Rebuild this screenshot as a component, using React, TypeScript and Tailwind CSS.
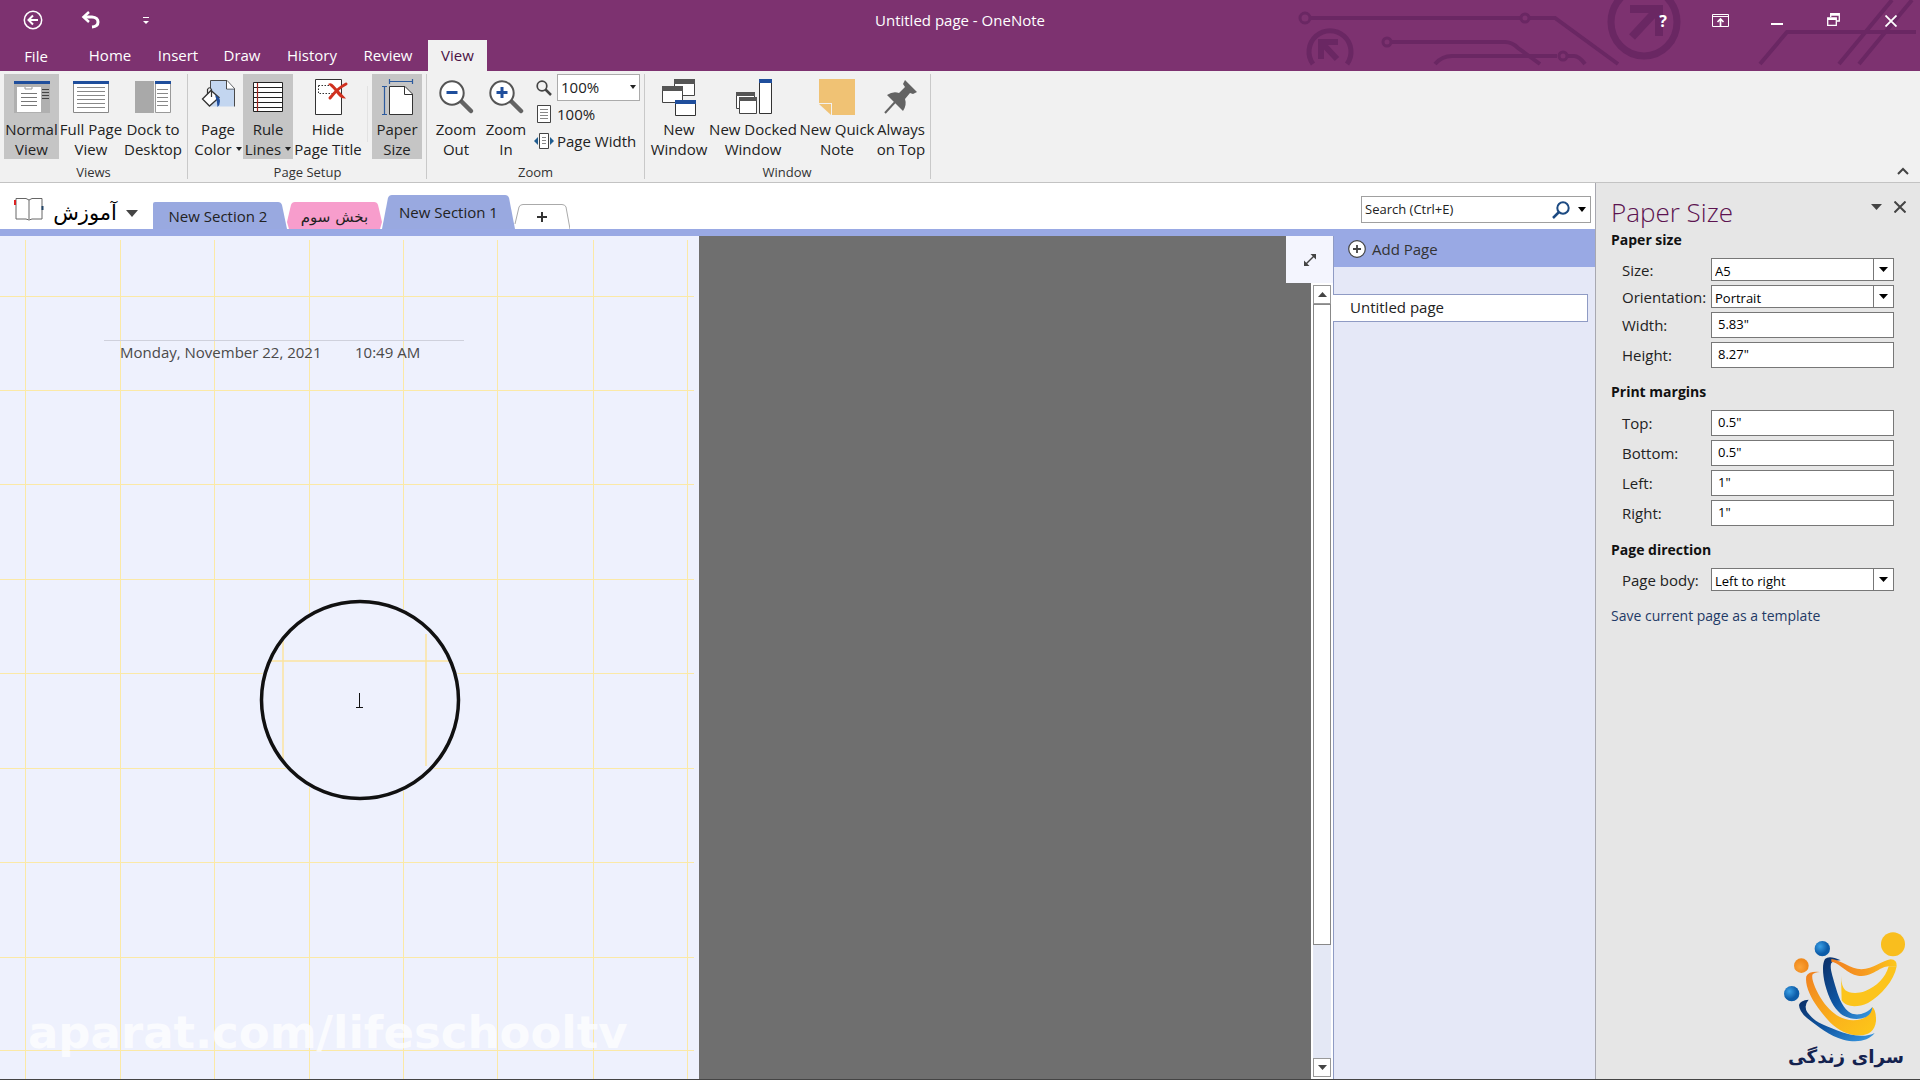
import React, { useId } from "react";

const UI = "font-['Open_Sans','Noto_Sans',sans-serif]";

function Caret({ className = "w-2 h-[5px]" }: { className?: string }) {
  return (
    <svg viewBox="0 0 10 6" preserveAspectRatio="none" className={className} fill="currentColor" aria-hidden>
      <path d="M0 0H10L5 6Z" />
    </svg>
  );
}

/* ---------- Title bar ---------- */

function Circuit() {
  return (
    <svg viewBox="0 0 640 70" className="pointer-events-none absolute top-0 right-0 h-[70px] w-[640px]" fill="none" stroke="#6a2763" strokeWidth="4" aria-hidden>
      <circle cx="25" cy="18" r="5" strokeWidth="3" />
      <path d="M31 18H240M250 18H275L338 64" />
      <circle cx="245" cy="18" r="4" strokeWidth="3" />
      <circle cx="107" cy="42" r="4" strokeWidth="3" />
      <path d="M112 42H225Q232 42 238 48L260 64" />
      <path d="M155 64Q162 56 172 56H277M288 56H294Q299 56 305 64" />
      <circle cx="283" cy="56" r="4" strokeWidth="3" />
      <path d="M33 64A21 21 0 1 1 67 64" strokeWidth="5" />
      <path d="M41 59V42H58M42 43L57 59" strokeWidth="6" />
      <ellipse cx="364" cy="22" rx="33" ry="34" strokeWidth="7" />
      <path d="M350 9H379V36M378 9L352 37" strokeWidth="8" />
      <path d="M480 64L507 32H636M559 64L612 0M579 64L607 30L632 0" />
    </svg>
  );
}

function TitleBar() {
  return (
    <div className="relative flex h-10 items-center text-white">
      <button aria-label="Back" className="ml-[23px]">
        <svg viewBox="0 0 20 20" className="size-5" fill="none" stroke="currentColor" strokeWidth="1.5">
          <circle cx="10" cy="10" r="8.7" />
          <path d="M15 10H6M10 5.5L5.5 10L10 14.500" strokeWidth="2" />
        </svg>
      </button>
      <button aria-label="Undo" className="ml-[38px]">
        <svg viewBox="0 0 20 18" className="h-[18px] w-5" fill="none" stroke="currentColor" strokeWidth="3">
          <path d="M3 6H11Q17 6.500 17 11Q17 15.500 11 16" />
          <path d="M8 1L2.500 6L8 11" strokeWidth="2.500" />
        </svg>
      </button>
      <button aria-label="Customize Quick Access Toolbar" className="ml-[42px] flex flex-col items-center gap-[3px]">
        <span className="h-px w-[6px] bg-white" />
        <Caret className="h-[3px] w-[6px]" />
      </button>
      <h1 className="pointer-events-none absolute inset-x-0 top-[10px] text-center text-[15px] leading-5">
        Untitled page - OneNote
      </h1>
      <div className="ml-auto flex items-center pt-px pr-[23px]">
        <button aria-label="Help" className="mr-[41px] w-4 text-center text-base leading-5 font-bold">?</button>
        <button aria-label="Ribbon Display Options" className="mr-[42px]">
          <svg viewBox="0 0 17 13" className="h-[13px] w-[17px]" fill="none" stroke="currentColor">
            <path d="M.5.5H16.500V12.500H.5ZM.5 2.500H16.500" />
            <path d="M8.500 12V5M5.500 8L8.500 5L11.500 8" strokeWidth="1.700" />
          </svg>
        </button>
        <button aria-label="Minimize" className="mr-11 flex h-2 items-end">
          <span className="h-[2px] w-3 bg-white" />
        </button>
        <button aria-label="Restore" className="mr-[45px]">
          <svg viewBox="0 0 13 13" className="mb-[3px] size-[13px]" fill="none" stroke="currentColor" strokeWidth="1.300">
            <path d="M.7 5H9.300V12.300H.7ZM.7 6.300H9.300M3.700 4V.7H12.300V8H10M3.700 2H12.300" />
          </svg>
        </button>
        <button aria-label="Close">
          <svg viewBox="0 0 12 12" className="size-3" stroke="currentColor" strokeWidth="1.800">
            <path d="M.5.5L11.500 11.500M11.500.5L.5 11.500" />
          </svg>
        </button>
      </div>
    </div>
  );
}

function RibbonTabs() {
  return (
    <nav className="relative flex h-[31px] items-stretch text-[15px] leading-[29px] text-white">
      <button className="w-[72px] pt-px">File</button>
      <button className="w-[76px]">Home</button>
      <button className="w-[60px]">Insert</button>
      <button className="w-[68px]">Draw</button>
      <button className="w-[72px]">History</button>
      <button className="w-20">Review</button>
      <button className="w-[59px] bg-[#f1f1f1] text-[#4a1145]">View</button>
    </nav>
  );
}

/* ---------- Ribbon icons (36 x 36) ---------- */

function Ico({ children }: { children: React.ReactNode }) {
  return (
    <svg viewBox="0 0 36 36" className="size-9 shrink-0 overflow-visible" fill="none" aria-hidden>
      {children}
    </svg>
  );
}

const NormalViewIcon = () => (
  <Ico>
    <path d="M0 2H36V34H0Z" fill="#b0b0b0" />
    <path d="M0 2H36V5H0Z" fill="#1f4e9c" />
    <path d="M3 8H27V33H3Z" fill="#fff" />
    <path d="M11 8V10H18V8" stroke="#999" />
    <path d="M7 14.500H23M7 18.500H23M7 22.500H23M7 26.500H23" stroke="#777" />
    <path d="M28 10.500H35M28 13.500H35M28 16.500H35M28 19.500H35" stroke="#444" />
  </Ico>
);
const FullPageIcon = () => (
  <Ico>
    <path d="M.5 4V33.500H35.500V4" fill="#fff" stroke="#888" />
    <path d="M0 2H36V5H0Z" fill="#1f4e9c" />
    <path d="M4 8.500H32M4 12.500H32M4 16.500H32M4 20.500H32M4 24.500H32M4 28.500H32" stroke="#888" />
  </Ico>
);
const DockIcon = () => (
  <Ico>
    <path d="M0 2H19V34H0Z" fill="#a9a9a9" />
    <path d="M20.500 4V33.500H35.500V4" fill="#fff" stroke="#999" />
    <path d="M20 2H36V5H20Z" fill="#1f4e9c" />
    <path d="M22 10.500H33M22 14.500H33M22 18.500H33M22 22.500H33M22 26.500H33" stroke="#888" />
  </Ico>
);
const PageColorIcon = () => (
  <Ico>
    <path d="M10.500 1.500H27L34.500 9.500V27.500H10.500Z" fill="#c3d6f0" />
    <path d="M10.500 9V1.500H27L34.500 9.500V27.500M26.500 1.500V10H34.500" stroke="#4a4a4a" />
    <path d="M27 2V9.500H34Z" fill="#fff" />
    <path d="M2.500 20L11 11.500L19 18.500L9.500 27Z" fill="#fff" stroke="#333" strokeWidth="1.300" />
    <path d="M7.500 15V10.500Q9.500 7 11.500 10.500V18" stroke="#333" strokeWidth="1.200" />
    <path d="M15 16Q20 18 20 22Q20 26 17.500 28Q17 21 15 16Z" fill="#1f4e9c" />
  </Ico>
);
const RuleLinesIcon = () => (
  <Ico>
    <path d="M3.500 3.500H32.500V32.500H3.500Z" fill="#fff" stroke="#222" />
    <path d="M4 8.500H32M4 13.500H32M4 18.500H32M4 23.500H32M4 28.500H32" stroke="#222" strokeWidth="1.200" />
    <path d="M7.500 4V32" stroke="#a3281f" strokeWidth="1.200" />
  </Ico>
);
const HideTitleIcon = () => (
  <Ico>
    <path d="M5.500.5H31.500V35.500H5.500Z" fill="#fff" stroke="#333" />
    <path d="M8.500 6.500H20M8.500 6.500V14.500H24" stroke="#333" strokeDasharray="1.500 1.500" />
    <path d="M18 5Q21 3 23.500 6Q29 12 36 19.500Q31 20 28 16Q24 10 18 5Z" fill="#d0311f" />
    <path d="M36 5Q28 9 20 19" stroke="#d0311f" strokeWidth="3" strokeLinecap="round" />
  </Ico>
);
const PaperSizeIcon = () => (
  <Ico>
    <path d="M10.500 7.500H26L33.500 15V35.500H10.500Z" fill="#fff" stroke="#333" />
    <path d="M25.500 8V15.500H33" stroke="#333" />
    <path d="M11 2.500H33M10.500 0V5M33.500 0V5M5.500 8V35M3 7.500H8M3 35.500H8" stroke="#2c5a9e" strokeWidth="1.200" />
  </Ico>
);
const ZoomIcon = ({ plus }: { plus?: boolean }) => (
  <Ico>
    <path d="M23 22L33 32" stroke="#636363" strokeWidth="4.500" strokeLinecap="round" />
    <circle cx="14" cy="14" r="11.700" fill="#fff" stroke="#555" strokeWidth="2" />
    <path d={plus ? "M8.500 13.500H19.500M14 8V19" : "M8.500 13.500H19.500"} stroke="#1f4e9c" strokeWidth="3" />
  </Ico>
);
const NewWindowIcon = () => (
  <Ico>
    <path d="M13.500 1.500H33.500V16.500H13.500Z" fill="#fff" stroke="#444" />
    <path d="M13 0H34V5H13Z" fill="#555" />
    <path d="M1.500 8.500H21.500V23.500H1.500Z" fill="#fff" stroke="#444" />
    <path d="M1 7H22V12H1Z" fill="#555" />
    <path d="M14.500 22.500H34.500V36.500H14.500Z" fill="#fff" stroke="#333" />
    <path d="M14 21H35V25H14Z" fill="#1f4e9c" />
  </Ico>
);
const DockedWindowIcon = () => (
  <Ico>
    <path d="M1.500 14.500H19.500V29.500H1.500Z" fill="#fff" stroke="#444" />
    <path d="M1 13H20V17H1Z" fill="#555" />
    <path d="M4.500 19.500H21.500V34.500H4.500Z" fill="#fff" stroke="#444" />
    <path d="M4 18H22V22H4Z" fill="#555" />
    <path d="M24.500.5H36.500V34.500H24.500Z" fill="#fff" stroke="#333" />
    <path d="M24 0H37V4H24Z" fill="#1f4e9c" />
  </Ico>
);
const QuickNoteIcon = () => (
  <Ico>
    <path d="M0 0H36V36H13V24H0Z" fill="#f0c274" />
    <path d="M0 25H12V36Z" fill="#f0c274" />
  </Ico>
);
const PinIcon = () => (
  <Ico>
    <path d="M22 1L34 13L30 15L27 14L22 20Q24 26 20 32L4 16Q10 12 16 14L22 8L20 5Z" fill="#636363" />
    <path d="M13 22L2 34" stroke="#636363" strokeWidth="2" />
  </Ico>
);

/* ---------- Ribbon ---------- */

function RibbonButton({ icon, lines, width, active, caret }: {
  icon: React.ReactNode; lines: [string, string]; width: string; active?: boolean; caret?: boolean;
}) {
  return (
    <button className={`flex h-[85px] flex-col items-center pt-[5px] text-[15px] leading-5 whitespace-nowrap ${width} ${active ? "bg-[#c5c5c5]" : ""}`}>
      {icon}
      <span className="mt-1">{lines[0]}</span>
      <span className="flex items-center gap-1">
        {lines[1]}
        {caret && <Caret className="h-1 w-[6px]" />}
      </span>
    </button>
  );
}

function Group({ label, children, className = "" }: { label: string; children: React.ReactNode; className?: string }) {
  return (
    <section className={`my-[3px] flex flex-col border-r border-[#c9c9c9] ${className}`}>
      <div className="flex">{children}</div>
      <div className="mt-[3px] text-center text-[13px] leading-5 text-[#333]">{label}</div>
    </section>
  );
}

function Ribbon() {
  return (
    <div className="flex h-28 border-b border-[#c3c3c3] bg-[#f1f1f1] text-[#222]">
      <Group label="Views" className="pr-1 pl-1">
        <RibbonButton icon={<NormalViewIcon />} lines={["Normal", "View"]} width="w-[55px]" active />
        <RibbonButton icon={<FullPageIcon />} lines={["Full Page", "View"]} width="w-16" />
        <RibbonButton icon={<DockIcon />} lines={["Dock to", "Desktop"]} width="w-[60px]" />
      </Group>
      <Group label="Page Setup" className="pr-1 pl-[5px]">
        <RibbonButton icon={<PageColorIcon />} lines={["Page", "Color"]} width="w-[50px]" caret />
        <RibbonButton icon={<RuleLinesIcon />} lines={["Rule", "Lines"]} width="w-[50px]" caret active />
        <RibbonButton icon={<HideTitleIcon />} lines={["Hide", "Page Title"]} width="w-[70px]" />
        <span className="mt-3 mr-1 ml-1 h-14 w-px bg-[#e2e2e2]" />
        <RibbonButton icon={<PaperSizeIcon />} lines={["Paper", "Size"]} width="w-[50px]" active />
      </Group>
      <Group label="Zoom" className="pr-1 pl-1">
        <RibbonButton icon={<ZoomIcon />} lines={["Zoom", "Out"]} width="w-[50px]" />
        <RibbonButton icon={<ZoomIcon plus />} lines={["Zoom", "In"]} width="w-[50px]" />
        <div className="ml-[3px] flex w-[106px] flex-col text-[15px] leading-5">
          <div className="flex items-center">
            <svg viewBox="0 0 16 16" className="ml-[2px] size-4" fill="none" stroke="#444" aria-hidden>
              <circle cx="6" cy="6" r="4.800" strokeWidth="1.700" />
              <path d="M9.500 9.500L15 15" strokeWidth="2.500" />
            </svg>
            <span className="relative ml-[5px] block h-[27px] flex-1">
              <select aria-label="Zoom level" className="block size-full appearance-none border border-[#ababab] bg-white pb-[2px] pl-[3px] text-[15px]">
                <option>100%</option>
              </select>
              <Caret className="pointer-events-none absolute top-[11px] right-1 h-1 w-[6px]" />
            </span>
          </div>
          <button className="mt-[3px] flex items-center">
            <svg viewBox="0 0 14 18" className="ml-[3px] h-[18px] w-[14px]" fill="#fff" stroke="#444" aria-hidden>
              <path d="M.5.5H13.500V17.500H.5Z" />
              <path d="M3 4.500H11M3 7.500H11M3 10.500H11M3 13.500H11" stroke="#888" />
            </svg>
            <span className="ml-[6px]">100%</span>
          </button>
          <button className="mt-[7px] flex items-center whitespace-nowrap">
            <svg viewBox="0 0 20 16" className="h-4 w-5 shrink-0" fill="#fff" stroke="#444" aria-hidden>
              <path d="M5.500.5H14.500V15.500H5.500Z" />
              <path d="M8 4.500H12M8 7.500H12M8 10.500H12" stroke="#888" />
              <path d="M4 4V12L0 8ZM16 4V12L20 8Z" fill="#1f5c8f" stroke="none" />
            </svg>
            <span className="ml-[3px]">Page Width</span>
          </button>
        </div>
      </Group>
      <Group label="Window" className="pr-[5px] pl-1">
        <RibbonButton icon={<NewWindowIcon />} lines={["New", "Window"]} width="w-[60px]" />
        <RibbonButton icon={<DockedWindowIcon />} lines={["New Docked", "Window"]} width="w-[88px]" />
        <RibbonButton icon={<QuickNoteIcon />} lines={["New Quick", "Note"]} width="w-20" />
        <RibbonButton icon={<PinIcon />} lines={["Always", "on Top"]} width="w-12" />
      </Group>
      <button aria-label="Collapse the Ribbon" className="mr-[11px] mb-[7px] ml-auto self-end">
        <svg viewBox="0 0 12 8" className="h-2 w-3" fill="none" stroke="#444" strokeWidth="2">
          <path d="M1 7L6 2L11 7" />
        </svg>
      </button>
    </div>
  );
}

/* ---------- Section tabs ---------- */

function SectionBar() {
  return (
    <div className="flex h-[53px] items-end border-b-[7px] border-[#99a9e4] bg-white">
      <button className="flex h-9 items-center pl-[14px] text-black">
        <svg viewBox="0 0 30 24" className="mb-1 h-6 w-[30px] shrink-0" fill="none" stroke="#666" aria-hidden>
          <path d="M2 1.500H12L15 3L18 1.500H28V22H18L15 23L12 22H2ZM15 3V22" />
          <path d="M1 3V8" stroke="#d22" strokeWidth="2" />
          <path d="M28.500 9V13" stroke="#246" strokeWidth="2" />
        </svg>
        <span className="ml-2 w-[66px] pt-1 text-[21px] leading-8 font-['DejaVu_Sans',sans-serif]" lang="fa">آموزش</span>
        <Caret className="mt-1 ml-2 h-[7px] w-3 text-[#444]" />
      </button>
      <div className="ml-[15px] flex items-end">
        <button className="relative h-[27px] w-[134px] text-[15px] leading-[28px] text-[#222]">
          <svg viewBox="0 0 134 27" className="absolute inset-0 size-full" aria-hidden>
            <path d="M0 27V2Q0 0 2 0H125Q128 0 129 3L134 27Z" fill="#99a9e0" />
          </svg>
          <span className="relative pr-1">New Section 2</span>
        </button>
        <button className="relative h-[27px] w-[95px] text-[15px] leading-[28px] text-[#222]">
          <svg viewBox="0 0 96 27" preserveAspectRatio="none" className="absolute inset-0 size-full" aria-hidden>
            <path d="M2 27L0 20L4 3Q5 0 8 0H88Q91 0 92 3L96 20L94 27Z" fill="#f79dcc" />
          </svg>
          <span className="relative font-['DejaVu_Sans',sans-serif]" lang="fa">بخش سوم</span>
        </button>
        <button className="relative h-[34px] w-[133px] text-[15px] leading-[34px] text-[#222]">
          <svg viewBox="0 0 134 34" preserveAspectRatio="none" className="absolute inset-0 size-full" aria-hidden>
            <path d="M0 34L6 3Q7 0 10 0H124Q127 0 128 3L134 34Z" fill="#99a9e0" />
          </svg>
          <span className="relative">New Section 1</span>
        </button>
        <button aria-label="Create a New Section" className="relative -ml-px h-[25px] w-14">
          <svg viewBox="0 0 56 25" className="absolute inset-0 size-full" fill="none" stroke="#aaa" aria-hidden>
            <path d="M1 20L5 3Q6 .5 9 .5H48Q51 .5 52 3L56 25" />
            <path d="M23 13H33M28 8V18" stroke="#333" strokeWidth="2" />
          </svg>
        </button>
      </div>
      <label className="mr-1 mb-[6px] ml-auto flex h-[27px] w-[230px] items-center border border-[#a0a0a0] bg-white">
        <input type="search" aria-label="Search" placeholder="Search (Ctrl+E)" className="min-w-0 flex-1 pl-[3px] text-[13px] placeholder:text-[#222] focus:outline-none" />
        <svg viewBox="0 0 18 18" className="size-[18px]" fill="none" stroke="#1c4a82" aria-hidden>
          <circle cx="11" cy="7" r="5.700" strokeWidth="2" />
          <path d="M7 11L1 17" strokeWidth="2.500" />
        </svg>
        <Caret className="mr-1 ml-2 h-[5px] w-2" />
      </label>
    </div>
  );
}

/* ---------- Page canvas ---------- */

const COLS = [25, 120, 214, 309, 403, 497, 593, 687];
const ROWS = [60, 154, 248, 343, 437, 532, 626, 721, 814];

function Canvas() {
  const clip = useId();
  return (
    <main className="relative min-w-0 flex-1 overflow-hidden bg-[#6f6f6f]">
      <div className="relative h-full w-[699px] overflow-hidden bg-[#eef1fd]">
        <svg className="absolute inset-0 size-full" fill="none" stroke="#fbe9a6" aria-hidden>
          {COLS.map((x) => <path key={x} d={`M${x + 0.5} 4V2000`} />)}
          {ROWS.map((y) => <path key={y} d={`M0 ${y + 0.5}H694`} />)}
        </svg>
        <div className="relative ml-[104px] w-[360px] pt-[104px]">
          <div className="flex border-t border-[#cfd1dc] pt-px pl-4 text-[15px] leading-5 text-[#4a4a4a]">
            <span className="w-[235px]">Monday, November 22, 2021</span>
            <span>10:49 AM</span>
          </div>
        </div>
        <svg viewBox="0 0 208 208" className="absolute top-[360px] left-[256px] size-52" fill="none" aria-hidden>
          <clipPath id={clip}><circle cx="104" cy="104" r="97" /></clipPath>
          <circle cx="104" cy="104" r="101" fill="#eef1fd" />
          <g clipPath={`url(#${clip})`} stroke="#fbe3a0" strokeWidth="1.500">
            <path d="M27 0V208M170 38V170M0 65H208" />
          </g>
          <circle cx="104" cy="104" r="98.500" stroke="#111" strokeWidth="3.500" />
          <path d="M103.500 97V111M100 111.500H107" stroke="#111" />
        </svg>
        <div className="absolute bottom-[14px] left-7 text-[45px] leading-[64px] font-bold whitespace-nowrap text-white/75 font-['DejaVu_Sans',sans-serif]">
          aparat.com/lifeschooltv
        </div>
      </div>
    </main>
  );
}

function CanvasScroll() {
  return (
    <div className="relative flex w-[22px] flex-col bg-white pt-[49px] pr-[2px] pb-[2px] pl-[2px]">
      <button aria-label="Full Page View" className="absolute top-0 right-0 flex h-[47px] w-[47px] items-center justify-center bg-[#f4f5fe]">
        <svg viewBox="0 0 12 12" className="size-3" fill="#444" stroke="#444" aria-hidden>
          <path d="M2 10L10 2" strokeWidth="1.500" />
          <path d="M6.500 0H12V5.500ZM0 6.500V12H5.500Z" stroke="none" />
        </svg>
      </button>
      <button aria-label="Scroll up" className="flex h-[19px] shrink-0 items-center justify-center border border-[#999] text-[#444]">
        <Caret className="h-[5px] w-[9px] rotate-180" />
      </button>
      <div className="flex min-h-0 flex-1 flex-col bg-[#e4e8f5]">
        <div className="h-[85%] border border-[#888] bg-white" />
      </div>
      <button aria-label="Scroll down" className="flex h-[19px] shrink-0 items-center justify-center border border-[#999] text-[#444]">
        <Caret className="h-[5px] w-[9px]" />
      </button>
    </div>
  );
}

function PageList() {
  return (
    <aside className="w-[262px] shrink-0 border-l border-[#8f9bc4] bg-[#e5e8f7] text-[15px] leading-5 text-[#222]">
      <button className="flex h-[31px] w-full items-start gap-[6px] bg-[#99a9e4] pt-[3px] pl-[14px] text-[#333]">
        <svg viewBox="0 0 18 18" className="mt-px size-[18px]" fill="#fff" stroke="#444" aria-hidden>
          <circle cx="9" cy="9" r="8.300" strokeWidth="1.200" />
          <path d="M5 9H13M9 5V13" strokeWidth="1.800" />
        </svg>
        Add Page
      </button>
      <button className="mt-[27px] -ml-px block h-7 w-[255px] border border-l-0 border-[#8f9bc4] bg-white pb-[2px] pl-[17px] text-left">
        Untitled page
      </button>
    </aside>
  );
}

/* ---------- Paper Size pane ---------- */

function Field({ label, value, select, gap }: { label: string; value: string; select?: boolean; gap: string }) {
  const id = useId();
  return (
    <div className={`flex items-center ${gap}`}>
      <label htmlFor={id} className="w-[89px] shrink-0 text-[15px] leading-5 whitespace-nowrap">{label}</label>
      {select ? (
        <span className="relative block h-[23px] flex-1">
          <select id={id} className="block size-full appearance-none border border-[#777] bg-white pt-[3px] pl-[3px] text-[13px] text-black">
            <option>{value}</option>
          </select>
          <span className="pointer-events-none absolute inset-y-0 right-0 flex w-[21px] items-center justify-center border border-[#777] text-black">
            <Caret className="h-[5px] w-[9px]" />
          </span>
        </span>
      ) : (
        <input id={id} defaultValue={value} className="h-[26px] min-w-0 flex-1 border border-[#777] bg-white pb-[2px] pl-[6px] text-[13px] text-black" />
      )}
    </div>
  );
}

function Logo() {
  return (
    <svg viewBox="0 0 540 540" className="absolute right-0 -bottom-px size-[180px]" role="img" aria-label="سرای زندگی">
      <defs>
        <radialGradient id="blueDot" cx=".35" cy=".35"><stop offset="0" stopColor="#3ba0e6" /><stop offset="1" stopColor="#0d5ca8" /></radialGradient>
        <radialGradient id="orangeDot" cx=".4" cy=".6"><stop offset="0" stopColor="#fba43a" /><stop offset="1" stopColor="#f08a1c" /></radialGradient>
        <linearGradient id="blueArm" x1="0" y1="0" x2="1" y2="1"><stop offset="0" stopColor="#0c2f66" /><stop offset=".5" stopColor="#0f56a3" /><stop offset="1" stopColor="#3a9be4" /></linearGradient>
        <linearGradient id="goldArm" x1="0" y1="0" x2="1" y2="1"><stop offset="0" stopColor="#f08020" /><stop offset=".6" stopColor="#fbb41c" /><stop offset="1" stopColor="#fdc818" /></linearGradient>
        <linearGradient id="goldTop" x1="0" y1="0" x2="1" y2="0"><stop offset="0" stopColor="#f08020" /><stop offset=".5" stopColor="#f79a20" /><stop offset="1" stopColor="#fcc81c" /></linearGradient>
      </defs>
      <g transform="translate(0 3)">
        <circle cx="459" cy="130" r="36" fill="#f9be1e" />
        <circle cx="247" cy="143" r="23" fill="url(#blueDot)" />
        <circle cx="184" cy="194" r="22" fill="url(#orangeDot)" />
        <circle cx="155" cy="278" r="23" fill="url(#blueDot)" />
        <path d="M206 296Q180 298 177 312Q178 332 200 350C236 378 268 404 310 416C350 426 386 420 404 396C380 410 330 406 290 388C250 370 226 366 202 334Q190 314 206 296Z" fill="url(#blueArm)" />
        <path d="M240 213Q206 210 199 226C194 250 210 288 234 320C262 358 290 392 336 401C376 408 404 398 408 360Q409 328 397 318C390 344 368 358 340 358C300 356 272 334 248 300C226 268 212 230 218 220Q224 214 240 213Z" fill="url(#goldArm)" />
        <path d="M302 178Q268 162 255 174C246 188 248 220 255 250C266 292 282 322 302 338C326 356 356 358 378 348Q396 338 397 318C380 338 352 346 332 336C310 324 298 296 288 262C278 226 268 200 274 186Q282 178 302 178Z" fill="url(#blueArm)" />
        <path d="M274 182C292 182 312 208 342 221C376 232 400 216 420 204Q434 196 446 196L470 196Q472 176 452 175C428 178 400 204 364 205C330 204 306 178 274 174Z" fill="url(#goldTop)" />
        <path d="M303 225Q304 256 316 268C326 276 350 280 376 270C410 256 436 232 446 196L470 196C462 240 424 282 384 306C352 320 320 320 305 298Z" fill="#fcc41c" />
      </g>
      <text x="318" y="488" textAnchor="middle" direction="rtl" className="fill-[#14224f] text-[55px] font-bold font-['DejaVu_Sans',sans-serif]">سرای زندگی</text>
    </svg>
  );
}

function PaperSizePane() {
  return (
    <aside className="relative w-[325px] shrink-0 border-l border-[#a8a8b0] bg-[#e6e6e6] pt-2 pr-[26px] pl-[15px] text-[#222]">
      <div className="absolute top-[18px] right-[14px] flex items-center gap-3 text-[#444]">
        <button aria-label="Task Pane Options" className="block"><Caret className="h-[6px] w-[11px]" /></button>
        <button aria-label="Close pane" className="block">
          <svg viewBox="0 0 12 12" className="size-3" stroke="currentColor" strokeWidth="2"><path d="M.5.5L11.500 11.500M11.500.5L.5 11.500" /></svg>
        </button>
      </div>
      <h2 className="mt-[2px] text-[26px] leading-[38px] font-light text-[#5c1350]">Paper Size</h2>
      <h3 className="-mt-px text-sm leading-5 font-bold text-[#111]">Paper size</h3>
      <div className="pt-2 pl-[11px]">
        <Field label="Size:" value="A5" select gap="" />
        <Field label="Orientation:" value="Portrait" select gap="mt-1" />
        <Field label="Width:" value={'5.83"'} gap="mt-1" />
        <Field label="Height:" value={'8.27"'} gap="mt-1" />
      </div>
      <h3 className="mt-[14px] text-sm leading-5 font-bold text-[#111]">Print margins</h3>
      <div className="pt-2 pl-[11px]">
        <Field label="Top:" value={'0.5"'} gap="" />
        <Field label="Bottom:" value={'0.5"'} gap="mt-1" />
        <Field label="Left:" value={'1"'} gap="mt-1" />
        <Field label="Right:" value={'1"'} gap="mt-1" />
      </div>
      <h3 className="mt-[14px] text-sm leading-5 font-bold text-[#111]">Page direction</h3>
      <div className="pt-2 pl-[11px]">
        <Field label="Page body:" value="Left to right" select gap="" />
      </div>
      <a href="#template" className="mt-[15px] inline-block text-sm leading-5 whitespace-nowrap text-[#1f3a66]">Save current page as a template</a>
      <Logo />
    </aside>
  );
}

export default function App() {
  return (
    <div className={`flex h-screen flex-col overflow-hidden border-b border-[#444] bg-white ${UI}`}>
      <header className="relative bg-[#7d3270]">
        <Circuit />
        <TitleBar />
        <RibbonTabs />
      </header>
      <Ribbon />
      <div className="flex min-h-0 flex-1">
        <div className="flex min-w-0 flex-1 flex-col">
          <SectionBar />
          <div className="flex min-h-0 flex-1">
            <Canvas />
            <CanvasScroll />
            <PageList />
          </div>
        </div>
        <PaperSizePane />
      </div>
    </div>
  );
}
